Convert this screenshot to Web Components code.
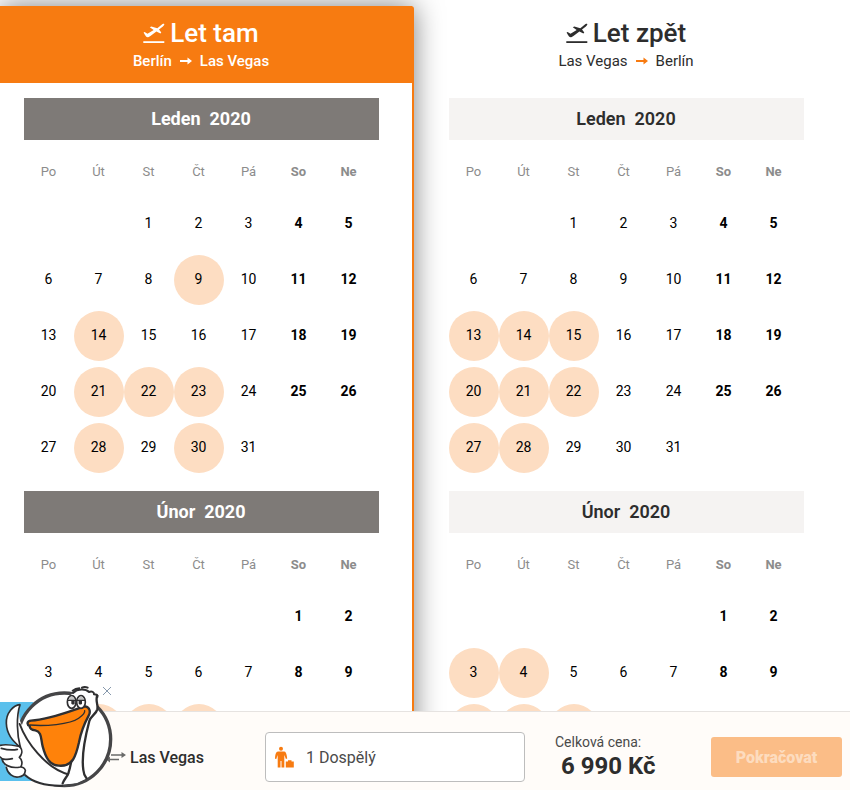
<!DOCTYPE html>
<html lang="cs">
<head>
<meta charset="utf-8">
<meta name="viewport" content="width=device-width, initial-scale=1">
<title>Výběr termínu letu</title>
<style>
  body {
    margin: 0;
    font-family: Roboto, "Liberation Sans", sans-serif;
    color: #2d2d2d;
    --accent: #f77b11;
  }
</style>
</head>
<body>
<flight-picker>
  <flight-panel active>
    <span slot="title">Let tam</span>
    <span slot="from">Berlín</span>
    <span slot="to">Las Vegas</span>
    <month-calendar active month="2020-01" flights="9,14,21,22,23,28,30"></month-calendar>
    <month-calendar active month="2020-02" flights="11,12,13"></month-calendar>
  </flight-panel>
  <flight-panel>
    <span slot="title">Let zpět</span>
    <span slot="from">Las Vegas</span>
    <span slot="to">Berlín</span>
    <month-calendar month="2020-01" flights="13,14,15,20,21,22,27,28"></month-calendar>
    <month-calendar month="2020-02" flights="3,4,10,11,12"></month-calendar>
  </flight-panel>
  <booking-bar slot="footer">
    <span slot="destination">Las Vegas</span>
    <span slot="passengers">1 Dospělý</span>
    <span slot="price">6 990 Kč</span>
  </booking-bar>
  <pelican-badge slot="footer"></pelican-badge>
</flight-picker>

<script>
const MONTHS = ['Leden', 'Únor', 'Březen', 'Duben', 'Květen', 'Červen', 'Červenec', 'Srpen', 'Září', 'Říjen', 'Listopad', 'Prosinec']
const WEEKDAYS = ['Po', 'Út', 'St', 'Čt', 'Pá', 'So', 'Ne']

class FlightPicker extends HTMLElement {
  constructor() {
    super()
    this.attachShadow({ mode: 'open' }).innerHTML = `
      <style>
        :host {
          display: flex;
          flex-direction: column;
          height: 100vh;
          background: #fff;
        }
        main {
          flex: 1;
          min-height: 0;
          overflow: hidden auto;
          scrollbar-width: none;
          display: grid;
          grid-template-columns: 1fr 1fr;
          align-items: start;
          padding-top: 6px;
        }
        footer { position: relative; }
      </style>
      <main><slot></slot></main>
      <footer><slot name="footer"></slot></footer>
    `
  }
}

class FlightPanel extends HTMLElement {
  constructor() {
    super()
    this.attachShadow({ mode: 'open' }).innerHTML = `
      <style>
        :host { display: block; }
        header {
          box-sizing: border-box;
          height: 77px;
          padding: 12px 47px 0 24px;
          text-align: center;
        }
        h2 {
          display: flex;
          justify-content: center;
          align-items: center;
          gap: 5px;
          margin: 0;
          font-size: 26px;
          line-height: 30px;
          font-weight: 500;
        }
        h2 svg { width: 22px; height: 22px; }
        p {
          display: flex;
          justify-content: center;
          align-items: center;
          gap: 8px;
          margin: 3px 0 0;
          font-size: 15px;
          line-height: 20px;
        }
        p svg { width: 12px; height: 12px; color: var(--accent); }
        .months { padding: 15px 46px 0 24px; }
        :host([active]) {
          margin-right: 11px;
          background: #fff;
          border-right: 2px solid var(--accent);
          border-radius: 0 3px 0 0;
          box-shadow: 0 0 28px rgba(0, 0, 0, 0.5);
        }
        :host([active]) header {
          padding-right: 34px;
          background: var(--accent);
          color: #fff;
        }
        :host([active]) p { font-weight: 500; }
        :host([active]) p svg { color: #fff; }
        :host([active]) .months { padding-right: 33px; }
      </style>
      <header>
        <h2>
          <svg viewBox="0 0 22 22" fill="currentColor" aria-hidden="true">
            <path d="M.3 19.2h21v1.8H.3z"/>
            <path d="M6.800 5.200l1.500-.7 6 1.700L18.300 3c1.200-.9 2.400-1.500 2.900-.9.500.6-.3 1.500-1.300 2.300L16 7.600l2.300 3-.9.8-4-1.900-6 4.400c-1.400 1-2.900 1.500-3.600 1.100C2.900 14.700.6 10.500.6 10.500l1-.6 2.900 1.800L10.700 8z"/>
          </svg>
          <slot name="title"></slot>
        </h2>
        <p>
          <slot name="from"></slot>
          <svg viewBox="0 0 12 12" fill="none" stroke="currentColor" stroke-width="2" aria-hidden="true">
            <path d="M0 6h9"/>
            <path d="M7.500 2.500L12 6 7.500 9.500z" fill="currentColor" stroke="none"/>
          </svg>
          <slot name="to"></slot>
        </p>
      </header>
      <div class="months"><slot></slot></div>
    `
  }
}

class MonthCalendar extends HTMLElement {
  constructor() {
    super()
    this.attachShadow({ mode: 'open' })
  }

  connectedCallback() {
    const [year, month] = this.getAttribute('month').split('-').map(Number)
    const flights = (this.getAttribute('flights') || '').split(',').map(Number)

    this.shadowRoot.innerHTML = `
      <style>
        :host { display: block; margin-bottom: 15px; }
        h3 {
          margin: 0;
          padding-right: 1px;
          background: #f5f3f2;
          font-size: 18px;
          line-height: 42px;
          font-weight: 600;
          text-align: center;
          white-space: pre;
        }
        :host([active]) h3 { background: #7e7a77; color: #fff; font-weight: 700; }
        table {
          width: calc(100% - 5px);
          table-layout: fixed;
          border-collapse: collapse;
          text-align: center;
        }
        th, td { height: 56px; padding: 0; box-sizing: border-box; }
        th {
          padding: 6px 1px 0 0;
          font-size: 13px;
          font-weight: 400;
          color: #8c8c8c;
        }
        td { font-size: 14px; color: #000; }
        th:nth-child(n + 6), td:nth-child(n + 6) { font-weight: 700; }
        .day {
          display: block;
          width: 50px;
          height: 50px;
          margin: 3px auto;
          padding: 0 1px 2px 0;
          box-sizing: border-box;
          border: 0;
          border-radius: 50%;
          background: none;
          font: inherit;
          line-height: 48px;
          color: inherit;
        }
        button.day { background: #fdddc2; cursor: pointer; }
      </style>
      <h3>${MONTHS[month - 1]}  ${year}</h3>
      <table>
        <thead><tr>${WEEKDAYS.map(d => `<th scope="col">${d}</th>`).join('')}</tr></thead>
        <tbody>${this.rows(year, month, flights)}</tbody>
      </table>
    `
  }

  rows(year, month, flights) {
    const count = new Date(year, month, 0).getDate()
    // week starts on Monday
    const offset = (new Date(year, month - 1, 1).getDay() + 6) % 7
    let html = ''
    for (let start = 1 - offset; start <= count; start += 7) {
      html += '<tr>'
      for (let day = start; day < start + 7; day++) {
        html += `<td>${day < 1 || day > count ? '' : this.day(day, flights)}</td>`
      }
      html += '</tr>'
    }
    return html
  }

  day(day, flights) {
    return flights.includes(day)
      ? `<button class="day" type="button">${day}</button>`
      : `<span class="day">${day}</span>`
  }
}

class BookingBar extends HTMLElement {
  constructor() {
    super()
    this.attachShadow({ mode: 'open' }).innerHTML = `
      <style>
        :host {
          box-sizing: border-box;
          display: grid;
          grid-template-columns: 1fr 260px 186px 131px;
          align-items: center;
          padding: 20px 8px 8px 0;
          border-top: 1px solid #e6e3e1;
          background: #fffcf9;
        }
        button { font: inherit; }
        .route {
          display: flex;
          align-items: center;
          gap: 4px;
          padding-left: 106px;
          font-size: 16px;
          font-weight: 500;
        }
        .route svg { width: 20px; height: 12px; color: #6a6a6a; }
        .passengers {
          display: flex;
          align-items: center;
          gap: 12px;
          height: 50px;
          padding: 0 8px;
          border: 1px solid #bdbdbd;
          border-radius: 4px;
          background: #fff;
          color: #4a4a4a;
          font-size: 16px;
          text-align: left;
        }
        .passengers svg { width: 20px; height: 22px; color: var(--accent); }
        .price { padding: 0 0 2px 30px; }
        .price span {
          display: block;
          font-size: 14px;
          line-height: 20px;
          color: #4a4a4a;
        }
        .price strong {
          display: block;
          padding-left: 6px;
          font-size: 24px;
          line-height: 28px;
          font-weight: 700;
        }
        .next {
          height: 40px;
          padding: 0;
          border: 0;
          border-radius: 3px;
          background: #fbbd87;
          color: #fddcbf;
          font-size: 16px;
          font-weight: 900;
        }
      </style>
      <div class="route">
        <svg viewBox="0 0 20 12" fill="none" stroke="currentColor" stroke-width="1.5" aria-hidden="true">
          <path d="M5 4h12M13 8.500H2"/>
          <path d="M15.500 1L20 4l-4.500 3zM4 5.500l-4 3 4 3z" fill="currentColor" stroke="none"/>
        </svg>
        <slot name="destination"></slot>
      </div>
      <button class="passengers" type="button">
        <svg viewBox="0 0 20 22" fill="currentColor" aria-hidden="true">
          <circle cx="7" cy="2.800" r="2"/>
          <path d="M4 5.500h6c1.800 0 2.500 2 3 5.500l.2 1.600-1.300.3L10.300 9v12.500H7.500v-6.500h-1v6.500H3.700V9L2.300 13 1 12.700C1.200 8.500 2 5.500 4 5.500z"/>
          <path d="M11.800 15.500h2.200v-1.300h3.500v1.300h2.300v6h-8z"/>
        </svg>
        <slot name="passengers"></slot>
      </button>
      <div class="price">
        <span>Celková cena:</span>
        <strong><slot name="price"></slot></strong>
      </div>
      <button class="next" type="button" disabled>Pokračovat</button>
    `
  }
}

// Mascot floating over the bottom left corner, with its close button
class PelicanBadge extends HTMLElement {
  constructor() {
    super()
    this.attachShadow({ mode: 'open' }).innerHTML = `
      <style>
        :host {
          position: absolute;
          left: 0;
          bottom: 0;
          width: 140px;
          height: 110px;
        }
        .pelican { display: block; width: 140px; height: 110px; }
        button {
          position: absolute;
          top: 6px;
          right: 28px;
          width: 10px;
          height: 10px;
          padding: 0;
          border: 0;
          background: none;
          cursor: pointer;
        }
        button svg { display: block; }
      </style>
      <svg class="pelican" viewBox="0 0 420 330" stroke="#2f2f31" stroke-width="7" stroke-linecap="round" stroke-linejoin="round" role="img" aria-label="Pelikán">
        <path d="M0 66h100v237H0z" fill="#5bc0ec" stroke="none"/>
        <circle cx="193" cy="178" r="139" fill="#fff" stroke="#454547" stroke-width="10"/>
        <!-- body and wings -->
        <path d="M60 74C40 76 18 98 19 130c1 32 18 52 42 70-24-6-47-10-61-3l0 38c8 2 10 6 16 22 6 12 14 22 26 32 12 5 24 3 33-4 20 16 56 32 92 32 12 0 18-2 24-8l18-33C150 255 94 205 61 125c-5-20-5-37-1-51z" fill="#fff" stroke="none"/>
        <path d="M60 74C40 76 18 98 19 130c1 32 18 52 42 72C51 165 48 110 60 74z" fill="#fff" stroke-width="5"/>
        <path d="M59 132C78 184 135 265 208 284" fill="none" stroke-width="6"/>
        <path d="M1 196c20-5 44 1 60 4M4 205c18 5 32 7 48 3M1 231c4 8 22 9 36 5M6 237c3 17 26 30 55 24M19 262c4 20 20 31 36 29 12-1 20-8 21-19M61 202c8 11 4 23-3 30 9 7 10 20 4 29 6 0 12 4 14 10" fill="none" stroke-width="5"/>
        <path d="M75 285c24 22 64 33 112 32" fill="none" stroke-width="6"/>
        <!-- neck and head -->
        <path d="M204 72c0-18 4-27 16-33 15-9 38-8 48-3 8-3 15 0 15 6 8 0 11 4 8 10-1 12 5 22 1 36-5 15-20 18-24 35-9 38-24 105-17 147 1 10 5 19 10 24l-30 15-47 5c3-8 14-15 20-25 17-31 18-68 31-121z" fill="#fff" stroke="none"/>
        <path d="M237 132c-15 44-18 107-32 148-4 11-13 18-17 30M292 47c-7 12 3 27 0 41-4 15-20 20-24 35-10 38-24 106-18 147 1 11 4 18 9 24" fill="none"/>
        <path d="M219 39c13-13 38-13 48-3 8-4 16 0 15 7 8 0 11 2 10 8M218 32c6-5 13-7 20-7M246 23c5-3 11-3 17 0" fill="none" stroke-width="6"/>
        <!-- beak -->
        <path d="M93 122c-13 1-13 12-4 16 0 8 6 12 17 13 20 5 16 25 22 48 9 34 21 57 48 58 43 4 52-30 61-70 5-27 17-58 29-80 6-10 4-26-10-28-9 0-13 5-22 7-43 15-96 34-141 36z" fill="#ff820a"/>
        <path d="M90 135c42 4 120-1 146-20 11-8 20-15 18-23" fill="none" stroke-width="4"/>
        <path d="M204 58q11-14 23 0v5h-23zM232 58q11-14 23 0v5h-23z" fill="#c4c4c4" stroke="none"/>
        <g fill="#fff" stroke-width="5">
          <ellipse cx="215" cy="66" rx="13" ry="19"/>
          <ellipse cx="243" cy="66" rx="13" ry="19"/>
        </g>
        <path d="M205 60q10-22 20 0zM233 60q10-22 20 0z" fill="#c4c4c4" stroke="none"/>
        <path d="M203 61h24M231 61h24" stroke-width="4"/>
        <path d="M214 63h10v8q-5 5-10 0zM236 63h10v8q-5 5-10 0z" fill="#2f2f31" stroke="none"/>
      </svg>
      <button type="button" aria-label="Zavřít">
        <svg viewBox="0 0 10 10" stroke="#8799ad" stroke-width="1" aria-hidden="true"><path d="M1 1l8 8M9 1L1 9"/></svg>
      </button>
    `
  }
}

customElements.define('flight-picker', FlightPicker)
customElements.define('flight-panel', FlightPanel)
customElements.define('month-calendar', MonthCalendar)
customElements.define('booking-bar', BookingBar)
customElements.define('pelican-badge', PelicanBadge)
</script>
</body>
</html>
